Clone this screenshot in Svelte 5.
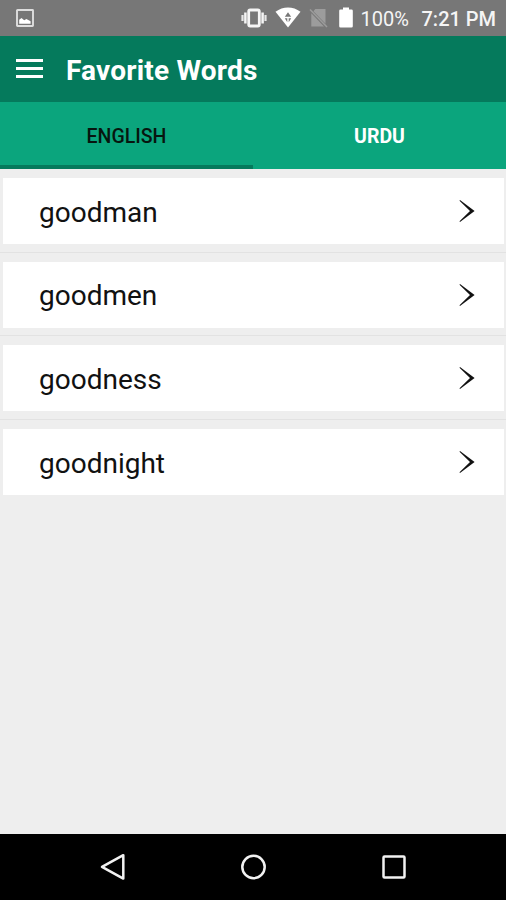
<script>
  const words = ['goodman', 'goodmen', 'goodness', 'goodnight'];
  const tabs = [
    { id: 'en', label: 'English' },
    { id: 'ur', label: 'Urdu' }
  ];

  let activeTab = $state('en');
</script>

<div class="screen">
  <div class="status-bar">
    <svg width="18" height="18" viewBox="0 0 18 18">
      <rect x="1" y="1" width="16" height="16" rx="0.5" fill="none" stroke="#dedede" stroke-width="1.9" />
      <path d="M3.2 14.8v-4l2.3-1.8 2.7 2.2 2.2-1.2 4.2 2.2v2.6z" fill="#fff" />
    </svg>
    <div class="status-icons">
      <svg width="26" height="20" viewBox="0 0 26 20">
        <rect x="7.7" y="2" width="10.6" height="16" rx="1.5" fill="none" stroke="#f5f5f5" stroke-width="2.8" />
        <path d="M4.4 4.5v11M21.6 4.5v11" stroke="#f5f5f5" stroke-width="2.5" />
        <path d="M1.5 7v6M24.5 7v6" stroke="#e6e6e6" stroke-width="2.2" />
      </svg>
      <svg class="wifi" width="26" height="21" viewBox="0 0 26 21">
        <path d="M0.5 4.8C8-1 18-1 25.5 4.8L13 20.5z" fill="#fff" />
        <path d="M13 5.2l3.2 4.6H9.8zM9.8 11.3h2.5v4zM16.2 11.3h-2.5v4z" fill="#777" />
      </svg>
      <svg class="no-sim" width="19" height="20" viewBox="0 0 19 20">
        <path d="M6.3 1H16.5v14.7L4.4 3.2zM2.3 5.2L15 18.4H2.3z" fill="#9c9c9c" />
        <path d="M1 1.4L18 19" stroke="#9c9c9c" stroke-width="1.5" />
      </svg>
      <svg class="battery" width="14" height="21" viewBox="0 0 14 21">
        <path d="M4 0.5h6v2h2.5q1.3 0 1.3 1.3v15.4q0 1.3-1.3 1.3h-11q-1.3 0-1.3-1.3V3.8q0-1.3 1.3-1.3H4z" fill="#fff" />
      </svg>
    </div>
    <span class="percent">100%</span>
    <span class="time">7:21 PM</span>
  </div>

  <header class="app-bar">
    <button type="button" class="menu-btn" aria-label="Menu">
      <span></span>
      <span></span>
      <span></span>
    </button>
    <h1>Favorite Words</h1>
  </header>

  <div class="tabs">
    {#each tabs as tab}
      <button
        type="button"
        class="tab"
        class:active={activeTab === tab.id}
        onclick={() => (activeTab = tab.id)}
      >
        {tab.label}
      </button>
    {/each}
  </div>

  <main class="word-list">
    {#each words as word}
      <div class="row">
        <button type="button" class="card">
          <span class="word">{word}</span>
          <svg width="16" height="24" viewBox="0 0 16 24">
            <path d="M1 1L15.6 12 1 23l-.5-.8L11 12 .5 1.8z" fill="#111" />
          </svg>
        </button>
      </div>
    {/each}
  </main>

  <nav class="nav-bar">
    <svg width="28" height="28" viewBox="0 0 28 28">
      <path d="M25.3 2.2v23.4L4 13.9z" />
    </svg>
    <svg width="28" height="28" viewBox="0 0 28 28">
      <circle cx="14.5" cy="14" r="11.2" />
    </svg>
    <svg width="28" height="28" viewBox="0 0 28 28">
      <rect x="3.5" y="3.5" width="21" height="21" rx="1" />
    </svg>
  </nav>
</div>

<style>
  :global(body) {
    background: #eee;
  }

  .screen {
    display: flex;
    flex-direction: column;
    height: 900px;
    overflow: hidden;
    background: #eee;
    font-family: Roboto, sans-serif;
  }

  button {
    padding: 0;
    border: none;
    background: none;
    font-family: inherit;
    cursor: pointer;
  }

  svg {
    display: block;
    flex: none;
  }

  .status-bar {
    display: flex;
    align-items: center;
    flex: none;
    height: 35.5px;
    padding: 0 11.5px 0 16px;
    background: #777;
    color: #f5f5f5;
    font-size: 20px;
    line-height: 36px;
    white-space: nowrap;
  }

  .status-icons {
    display: flex;
    align-items: center;
    margin-left: auto;
  }

  .wifi {
    margin-left: 8px;
  }

  .no-sim {
    margin-left: 8px;
  }

  .battery {
    margin-left: 11px;
  }

  .percent {
    width: 49px;
    margin-left: 8px;
    padding-top: 2px;
  }

  .time {
    width: 73px;
    margin-left: 12px;
    padding-top: 2px;
    font-weight: 500;
  }

  .app-bar {
    display: flex;
    align-items: center;
    flex: none;
    height: 66px;
    padding-left: 16px;
    background: #057a5c;
  }

  .menu-btn {
    display: flex;
    flex-direction: column;
    gap: 5px;
    width: 27px;
  }

  .menu-btn span {
    height: 3px;
    background: #fff;
  }

  h1 {
    margin: 4px 0 0 23px;
    color: #fff;
    font-size: 28px;
    font-weight: 700;
    letter-spacing: 0.2px;
    line-height: 36px;
    white-space: nowrap;
  }

  .tabs {
    display: flex;
    flex: none;
    height: 67.5px;
    background: #0ba57d;
  }

  .tab {
    flex: 1;
    padding-top: 7px;
    border-bottom: 4px solid transparent;
    color: #fff;
    font-size: 19.5px;
    font-weight: 700;
    text-transform: uppercase;
  }

  .tab.active {
    border-bottom-color: #057a5c;
    color: #07150f;
    font-weight: 500;
  }

  .word-list {
    flex: 1;
  }

  .row {
    height: 83.67px;
    padding: 9px 2px 0 3px;
    box-sizing: border-box;
    border-bottom: 1px solid #e2e2e2;
  }

  .row:last-child {
    border-bottom: none;
  }

  .card {
    display: flex;
    align-items: center;
    justify-content: space-between;
    width: 100%;
    height: 66px;
    padding: 0 29px 0 36px;
    background: #fff;
  }

  .word {
    padding-top: 3.6px;
    color: #111;
    font-size: 28px;
    line-height: 36px;
  }

  .nav-bar {
    display: flex;
    align-items: center;
    justify-content: center;
    gap: 113px;
    flex: none;
    height: 66.5px;
    background: #000;
  }

  .nav-bar svg {
    fill: none;
    stroke: #f2f2f2;
    stroke-width: 2.5;
    stroke-linejoin: round;
  }
</style>
